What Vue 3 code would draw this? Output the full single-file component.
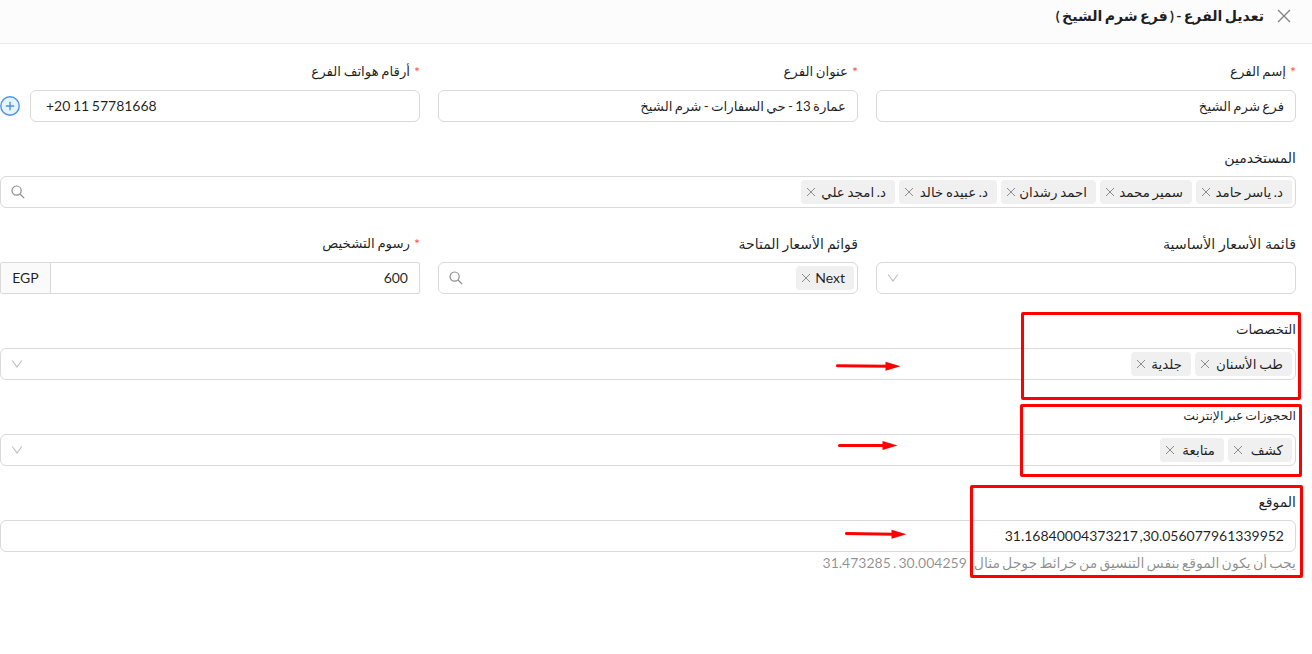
<template>
  <div class="drawer" dir="rtl">
    <header class="drawer-header">
      <svg class="close-icon" viewBox="0 0 14 14">
        <path d="M1 1 L13 13 M13 1 L1 13" />
      </svg>
      <h1 class="drawer-title">تعديل الفرع - ( فرع شرم الشيخ )</h1>
    </header>

    <main class="form">
      <div class="form-item">
        <label class="form-label required"><span>إسم الفرع</span></label>
        <div class="control input">
          <span class="value">فرع شرم الشيخ</span>
        </div>
      </div>
      <div class="form-item">
        <label class="form-label required"><span>عنوان الفرع</span></label>
        <div class="control input">
          <span class="value">عمارة 13 - حي السفارات - شرم الشيخ</span>
        </div>
      </div>
      <div class="form-item">
        <label class="form-label required"><span>أرقام هواتف الفرع</span></label>
        <div class="phone-row">
          <div class="control phone" dir="ltr">+20 11 57781668</div>
          <svg class="add-icon" viewBox="0 0 20 20">
            <circle cx="10" cy="10" r="9.2" />
            <path d="M10 5.8 V14.2 M5.8 10 H14.2" />
          </svg>
        </div>
      </div>

      <div class="form-item full">
        <label class="form-label wide"><span>المستخدمين</span></label>
        <div class="control select">
          <span v-for="user in users" :key="user.name" class="tag" :style="{ width: user.width + 'px' }">
            <span class="tag-text">{{ user.name }}</span>
            <svg class="tag-close" viewBox="0 0 10 10"><path d="M1 1 L9 9 M9 1 L1 9" /></svg>
          </span>
          <svg class="search-icon" viewBox="0 0 14 14">
            <circle cx="5.6" cy="5.6" r="4.6" />
            <path d="M9 9 L13.2 13.2" />
          </svg>
        </div>
      </div>

      <div class="form-item">
        <label class="form-label wide basic"><span>قائمة الأسعار الأساسية</span></label>
        <div class="control select">
          <svg class="arrow-icon" viewBox="0 0 12 12"><path d="M1.2 2.5 L6 9 L10.8 2.5" /></svg>
        </div>
      </div>
      <div class="form-item">
        <label class="form-label wide"><span>قوائم الأسعار المتاحة</span></label>
        <div class="control select">
          <span class="tag latin">
            <span class="tag-text">Next</span>
            <svg class="tag-close" viewBox="0 0 10 10"><path d="M1 1 L9 9 M9 1 L1 9" /></svg>
          </span>
          <svg class="search-icon" viewBox="0 0 14 14">
            <circle cx="5.6" cy="5.6" r="4.6" />
            <path d="M9 9 L13.2 13.2" />
          </svg>
        </div>
      </div>
      <div class="form-item">
        <label class="form-label required"><span>رسوم التشخيص</span></label>
        <div class="control fee">
          <span class="fee-value">600</span>
          <span class="fee-addon">EGP</span>
        </div>
      </div>

      <div v-for="field in selects" :key="field.label" class="form-item full">
        <label class="form-label" :class="{ compact: field.compact }"><span>{{ field.label }}</span></label>
        <div class="control select">
          <span v-for="tag in field.tags" :key="tag.name" class="tag" :style="{ width: tag.width + 'px' }">
            <span class="tag-text">{{ tag.name }}</span>
            <svg class="tag-close" viewBox="0 0 10 10"><path d="M1 1 L9 9 M9 1 L1 9" /></svg>
          </span>
          <svg class="arrow-icon" viewBox="0 0 12 12"><path d="M1.2 2.5 L6 9 L10.8 2.5" /></svg>
        </div>
      </div>

      <div class="form-item full">
        <label class="form-label wide"><span>الموقع</span></label>
        <div class="control input">
          <span class="coords" dir="ltr">31.16840004373217 ,30.056077961339952</span>
        </div>
        <div class="hint">
          <span class="hint-text">يجب أن يكون الموقع بنفس التنسيق من خرائط جوجل مثال</span>
          <span class="hint-example" dir="ltr">31.473285 . 30.004259</span>
        </div>
      </div>
    </main>

    <svg class="marks" viewBox="0 0 1312 654">
      <rect v-for="box in boxes" :key="box.y" :x="box.x" :y="box.y" :width="box.w" :height="box.h" rx="0.5" />
      <g v-for="arrow in arrows" :key="arrow.y">
        <path :d="`M${arrow.x} ${arrow.y} L${arrow.tip - 12} ${arrow.y + arrow.drop}`" />
        <polygon
          :points="`${arrow.tip - 15},${arrow.y + arrow.drop - 4.5} ${arrow.tip},${arrow.y + arrow.drop} ${arrow.tip - 15},${arrow.y + arrow.drop + 4.5}`"
        />
      </g>
    </svg>
  </div>
</template>

<script setup>
const users = [
  { name: 'د. ياسر حامد', width: 96 },
  { name: 'سمير محمد', width: 92 },
  { name: 'احمد رشدان', width: 95 },
  { name: 'د. عبيده خالد', width: 98 },
  { name: 'د. امجد علي', width: 94 }
]

const selects = [
  {
    label: 'التخصصات',
    tags: [
      { name: 'طب الأسنان', width: 97 },
      { name: 'جلدية', width: 60 }
    ]
  },
  {
    label: 'الحجوزات عبر الإنترنت',
    compact: true,
    tags: [
      { name: 'كشف', width: 64 },
      { name: 'متابعة', width: 64 }
    ]
  }
]

const boxes = [
  { x: 1022.5, y: 313.5, w: 277, h: 85 },
  { x: 1021.5, y: 405.5, w: 279, h: 70 },
  { x: 971.5, y: 486.5, w: 330, h: 90 }
]

const arrows = [
  { x: 837.5, y: 365.7, tip: 900.5, drop: 0.6 },
  { x: 839.5, y: 445.5, tip: 897.5, drop: 0 },
  { x: 846.5, y: 533.5, tip: 906.5, drop: 0.7 }
]
</script>

<style>
body {
  margin: 0;
  background: #fff;
}
</style>

<style scoped>
.drawer {
  position: relative;
  width: 1312px;
  height: 654px;
  overflow: hidden;
  box-sizing: border-box;
  font-family: Lato, 'DejaVu Sans', sans-serif;
  font-size: 14px;
  line-height: 22px;
  color: rgba(0, 0, 0, 0.88);
}

.drawer-header {
  display: flex;
  align-items: center;
  height: 44px;
  padding: 0 21px 11px 0;
  box-sizing: border-box;
  background: #fcfcfc;
  border-bottom: 1px solid #ebebeb;
}

.close-icon {
  width: 14px;
  height: 14px;
  margin-left: 13px;
  fill: none;
  stroke: #858585;
  stroke-width: 1.4;
}

.drawer-title {
  margin: 0;
  font-size: 14.1px;
  font-weight: 700;
  word-spacing: -1.1px;
  white-space: nowrap;
}

.form {
  display: grid;
  grid-template-columns: repeat(3, 420px);
  column-gap: 18px;
  row-gap: 24px;
  padding: 16px 16px 0 0;
}

.form-item {
  min-width: 0;
  height: 62px;
}

.full {
  grid-column: 1 / -1;
}

.form-label {
  display: flex;
  height: 22px;
  margin-bottom: 8px;
  font-size: 13.3px;
  line-height: 23px;
  word-spacing: -0.8px;
  white-space: nowrap;
}

.form-label.wide {
  font-size: 14px;
  word-spacing: -0.5px;
}

.form-label.basic {
  font-size: 14.3px;
  word-spacing: 0;
}

.form-label.compact {
  font-size: 12.4px;
  word-spacing: -1.2px;
}

.required::before {
  content: '*';
  margin-left: 4px;
  font-size: 14px;
  color: #ff4d4f;
}

.control {
  display: flex;
  align-items: center;
  height: 32px;
  box-sizing: border-box;
  border: 1px solid #d9d9d9;
  border-radius: 6px;
  background: #fff;
  white-space: nowrap;
}

.input {
  padding: 0 11px;
}

.value {
  font-size: 13.3px;
  word-spacing: -1.1px;
}

.coords {
  word-spacing: -2px;
}

.phone-row {
  display: flex;
  align-items: center;
  gap: 10px;
}

.phone {
  flex: 1;
  padding: 0 15px;
  word-spacing: -1px;
}

.add-icon {
  width: 20px;
  height: 20px;
  fill: #e6f4ff;
  stroke: #4a90f0;
  stroke-width: 1.4;
}

.select {
  gap: 4px;
  padding: 0 3px 0 10px;
}

.tag {
  display: flex;
  align-items: center;
  justify-content: space-between;
  height: 24px;
  padding: 0 9px 0 5px;
  box-sizing: border-box;
  border-radius: 4px;
  background: #f0f0f0;
  font-size: 13.4px;
  word-spacing: -0.7px;
}

.tag.latin {
  width: 58px;
  font-size: 14px;
}

.tag-close {
  flex: none;
  width: 10px;
  height: 10px;
  fill: none;
  stroke: #8c8c8c;
  stroke-width: 1;
}

.search-icon {
  width: 14px;
  height: 14px;
  margin-right: auto;
  fill: none;
  stroke: #8c8c8c;
  stroke-width: 1.2;
}

.arrow-icon {
  width: 12px;
  height: 12px;
  margin-right: auto;
  fill: none;
  stroke: #bfbfbf;
  stroke-width: 1.2;
}

.fee {
  border-radius: 2px;
}

.fee-value {
  flex: 1;
  padding-right: 11px;
}

.fee-addon {
  width: 49px;
  height: 30px;
  line-height: 30px;
  border-right: 1px solid #d9d9d9;
  background: #fafafa;
  text-align: center;
}

.hint {
  display: flex;
  gap: 7px;
  color: rgba(0, 0, 0, 0.45);
  word-spacing: -1.4px;
  white-space: nowrap;
}

.marks {
  position: absolute;
  top: 0;
  left: 0;
  width: 1312px;
  height: 654px;
  pointer-events: none;
}

.marks rect,
.marks path {
  fill: none;
  stroke: #f00;
  stroke-width: 3;
  stroke-linecap: round;
}

.marks polygon {
  fill: #f00;
}
</style>
